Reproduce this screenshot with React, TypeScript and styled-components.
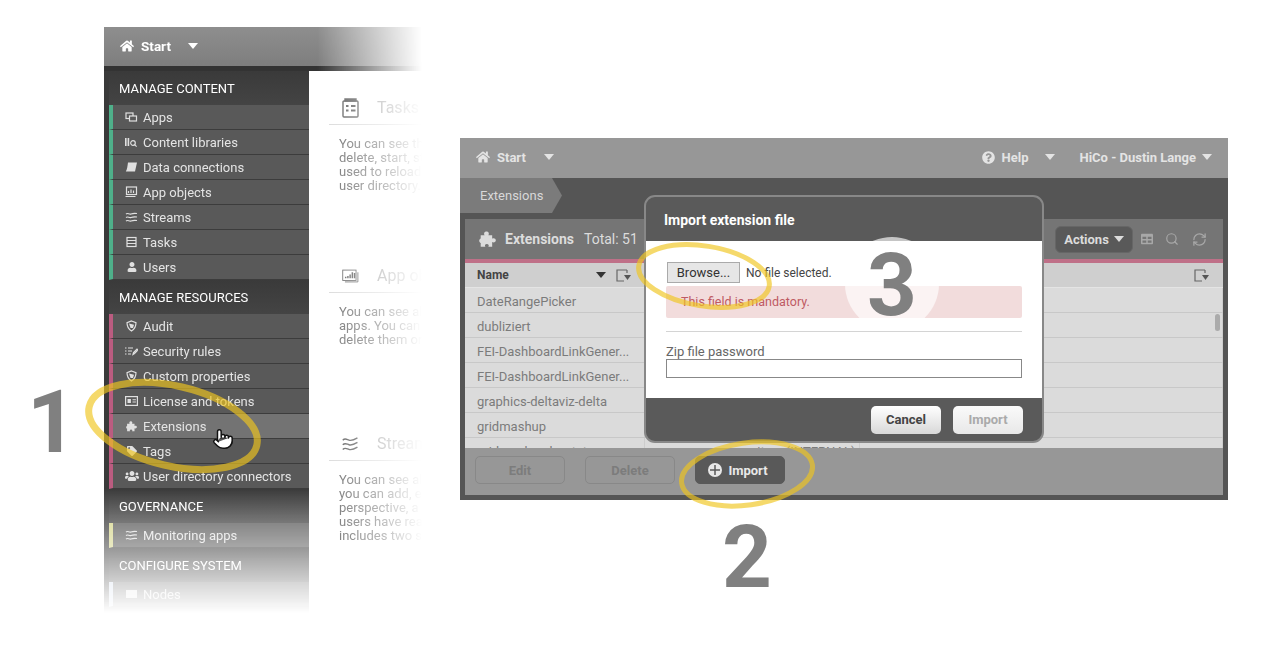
import React from "react";
import styled, { createGlobalStyle } from "styled-components";
import { FaHome, FaQuestionCircle, FaTable, FaTag, FaUser, FaUsers } from "react-icons/fa";
import { Search, RefreshCw, Pointer } from "lucide-react";

const GlobalStyle = createGlobalStyle`
  html, body {
    margin: 0;
    padding: 0;
    background: #fff;
    font-family: Roboto, "Liberation Sans", sans-serif;
  }
  * { box-sizing: border-box; }
`;

const Page = styled.div`
  position: relative;
  width: 1263px;
  height: 670px;
  overflow: hidden;
  display: flex;
  align-items: flex-start;
  gap: 38px;
  padding: 27px 0 0 104px;
`;

/* left screenshot */
const LeftShot = styled.div`
  width: 318px;
  display: flex;
  flex-direction: column;
`;

const FadedBar = styled.div`
  height: 44px;
  display: flex;
  flex-direction: column;
  -webkit-mask-image: linear-gradient(to right, #000 67%, transparent 100%);
  mask-image: linear-gradient(to right, #000 67%, transparent 100%);
`;

const FadedBarTop = styled.div`
  height: 39px;
  flex: none;
  display: flex;
  align-items: center;
  padding: 0 0 2px 16px;
  color: #fff;
  font-weight: 700;
  font-size: 13.5px;
  background: linear-gradient(#8e8e8e, #7e7e7e);
`;

const FadedBarStrip = styled.div`
  flex: 1;
  background: #333;
`;

const LeftBody = styled.div`
  display: flex;
  align-items: flex-start;
`;

const Sidebar = styled.nav`
  width: 205px;
  flex: none;
  height: 542px;
  background: #3a3a3a;
  padding-left: 5px;
  overflow: hidden;
  -webkit-mask-image: linear-gradient(to bottom, #000 77%, transparent 100%);
  mask-image: linear-gradient(to bottom, #000 77%, transparent 100%);
`;

const NavHead = styled.div`
  height: 34px;
  display: flex;
  align-items: center;
  padding-left: 10px;
  color: #fff;
  font-size: 13px;
  background: linear-gradient(#3a3a3a, #444);
`;

const NavItem = styled.div<{ $bar: string; $active?: boolean }>`
  height: 25px;
  display: flex;
  align-items: center;
  border-left: 4px solid ${(p) => p.$bar};
  border-bottom: 1px solid #3c3c3c;
  background: ${(p) => (p.$active ? "#737373" : "#595959")};
  color: #e4e4e4;
  font-size: 13px;
`;

const NavIcon = styled.span`
  width: 30px;
  flex: none;
  display: flex;
  justify-content: center;
  padding-left: 7px;
  color: #e0e0e0;
`;

const Content = styled.div`
  width: 113px;
  height: 542px;
  background: #fff;
  overflow: hidden;
  padding: 24px 0 0 20px;
  -webkit-mask-image: linear-gradient(to right, #000 18%, rgba(0, 0, 0, 0.5) 65%, transparent 100%);
  mask-image: linear-gradient(to right, #000 18%, rgba(0, 0, 0, 0.5) 65%, transparent 100%);
`;

const Section = styled.section`
  height: 168px;
  width: 320px;
`;

const SectionHead = styled.div`
  height: 30px;
  display: flex;
  align-items: center;
  border-bottom: 1px solid #ddd;
  padding: 0 0 4px 13px;
  gap: 18px;
  color: #aaa;
  font-size: 16px;
  white-space: nowrap;
`;

const SectionIcon = styled.span`
  width: 17px;
  display: flex;
  justify-content: center;
  color: #666;
`;

const SectionText = styled.p`
  margin: 12px 0 0 10px;
  color: #777;
  font-size: 13px;
  line-height: 14px;
  white-space: pre;
`;

/* right screenshot */
const RightShot = styled.div`
  position: relative;
  margin-top: 111px;
  width: 768px;
  height: 362px;
  display: flex;
  flex-direction: column;
  background: #555;
`;

const TopBar = styled.div`
  height: 40px;
  flex: none;
  background: #979797;
  display: flex;
  align-items: center;
  padding: 0 16px 2px;
  color: #e4e4e4;
  font-size: 13px;
  font-weight: 700;
`;

const TopEntry = styled.span<{ $gap?: number; $lead?: number }>`
  display: flex;
  align-items: center;
  gap: 7px;
  margin-left: ${(p) => p.$lead ?? 0}px;
  margin-right: ${(p) => p.$gap ?? 0}px;
`;

const Spacer = styled.div`
  flex: 1;
`;

const Caret = styled.i<{ $size?: number; $color?: string }>`
  display: inline-block;
  width: 0;
  height: 0;
  border-left: ${(p) => p.$size ?? 5}px solid transparent;
  border-right: ${(p) => p.$size ?? 5}px solid transparent;
  border-top: ${(p) => (p.$size ?? 5) + 1}px solid ${(p) => p.$color ?? "currentColor"};
`;

const Crumbs = styled.div`
  height: 41px;
  flex: none;
  display: flex;
  align-items: flex-start;
`;

const Crumb = styled.div`
  width: 102px;
  height: 35px;
  display: flex;
  align-items: center;
  padding-left: 20px;
  background: #7b7b7b;
  color: #d8d8d8;
  font-size: 13px;
  clip-path: polygon(0 0, 92px 0, 100% 50%, 92px 100%, 0 100%);
`;

const Panel = styled.div`
  flex: 1;
  margin: 0 5px 5px;
  display: flex;
  flex-direction: column;
  background: #979797;
`;

const PanelHead = styled.div`
  height: 44px;
  flex: none;
  display: flex;
  align-items: center;
  padding: 0 16px 0 14px;
  background: #757575;
  border-bottom: 4px solid #bf7088;
  color: #dcdcdc;
  font-size: 14px;
`;

const PanelTitle = styled.strong`
  margin: 0 10px 0 9px;
  font-weight: 700;
`;

const ActionsButton = styled.div`
  width: 78px;
  height: 27px;
  margin-right: 8px;
  border-radius: 6px;
  background: #595959;
  border: 1px solid #666;
  display: flex;
  align-items: center;
  justify-content: center;
  gap: 5px;
  font-size: 13px;
  font-weight: 700;
`;

const ToolIcon = styled.span<{ $gap: number }>`
  display: flex;
  color: #a8a8a8;
  margin-right: ${(p) => p.$gap}px;
`;

const TableHead = styled.div`
  height: 25px;
  flex: none;
  display: grid;
  grid-template-columns: 180px 215px 1fr;
  background: #cfcfcf;
  border-bottom: 1px solid #e4e4e4;
  color: #444;
  font-size: 12px;
  font-weight: 700;
`;

const HeadCell = styled.div`
  display: flex;
  align-items: center;
  justify-content: flex-end;
  gap: 10px;
  padding: 0 14px 0 12px;
`;

const HeadName = styled.span`
  margin-right: auto;
`;

const TableBody = styled.div`
  position: relative;
  height: 160px;
  flex: none;
  overflow: hidden;
  background: #dbdbdb;
`;

const Row = styled.div`
  height: 25px;
  display: grid;
  grid-template-columns: 180px 215px 1fr;
  border-bottom: 1px solid #c8c8c8;
  color: #7b7b7b;
  font-size: 13px;
`;

const Cell = styled.div<{ $indent?: number }>`
  display: flex;
  align-items: center;
  padding: 2px 0 0 ${(p) => p.$indent ?? 12}px;
  border-right: 1px solid #cdcdcd;
  white-space: nowrap;
  overflow: hidden;
`;

const Scroll = styled.div`
  position: absolute;
  right: 3px;
  top: 26px;
  width: 5px;
  height: 17px;
  border-radius: 3px;
  background: #ababab;
`;

const PanelFoot = styled.div`
  flex: 1;
  display: flex;
  align-items: center;
  gap: 20px;
  padding: 0 10px 3px;
`;

const FootButton = styled.div<{ $on?: boolean }>`
  width: 90px;
  height: 28px;
  border-radius: 5px;
  display: flex;
  align-items: center;
  justify-content: center;
  gap: 6px;
  padding-right: ${(p) => (p.$on ? 4 : 0)}px;
  font-size: 13px;
  font-weight: 700;
  color: ${(p) => (p.$on ? "#e8e8e8" : "#7c7c7c")};
  background: ${(p) => (p.$on ? "#595959" : "transparent")};
  border: 1px solid ${(p) => (p.$on ? "#595959" : "#888")};
`;

/* dialog */
const Modal = styled.div`
  position: absolute;
  left: 184px;
  top: 57px;
  width: 400px;
  height: 248px;
  display: flex;
  flex-direction: column;
  border: 2px solid #888;
  border-radius: 11px;
  overflow: hidden;
  background: #5a5a5a;
`;

const ModalHead = styled.div`
  height: 44px;
  flex: none;
  display: flex;
  align-items: center;
  padding: 2px 0 0 18px;
  color: #fff;
  font-size: 14px;
  font-weight: 700;
`;

const ModalBody = styled.div`
  height: 157px;
  flex: none;
  background: #fff;
  padding: 20px 20px 0;
`;

const FileRow = styled.div`
  height: 25px;
  display: flex;
  align-items: flex-start;
  gap: 6px;
  margin-left: 1px;
  color: #444;
  font-size: 12px;
  line-height: 24px;
`;

const BrowseButton = styled.div`
  width: 73px;
  height: 21px;
  margin-top: 1px;
  display: flex;
  align-items: center;
  justify-content: center;
  background: #e6e6e6;
  border: 1px solid #aaa;
  color: #333;
  font-size: 13px;
`;

const ErrorBox = styled.div`
  height: 32px;
  display: flex;
  align-items: center;
  padding: 0 0 2px 15px;
  border-radius: 2px;
  background: #f2dcdc;
  color: #bf5a63;
  font-size: 12.5px;
`;

const Divider = styled.div`
  margin: 13px 0 13px;
  border-top: 1px solid #d4d4d4;
`;

const FieldLabel = styled.div`
  height: 14px;
  line-height: 14px;
  color: #666;
  font-size: 13px;
`;

const FieldInput = styled.div`
  height: 19px;
  border: 1px solid #888;
`;

const ModalFoot = styled.div`
  flex: 1;
  display: flex;
  align-items: center;
  justify-content: flex-end;
  gap: 12px;
  padding: 0 19px 0 0;
`;

const ModalButton = styled.div<{ $muted?: boolean }>`
  width: 70px;
  height: 28px;
  border-radius: 5px;
  display: flex;
  align-items: center;
  justify-content: center;
  font-size: 13px;
  font-weight: 700;
  color: ${(p) => (p.$muted ? "#aaa" : "#444")};
  background: ${(p) =>
    p.$muted ? "linear-gradient(#fafafa, #e8e8e8)" : "linear-gradient(#fff, #d8d8d8)"};
`;

/* annotations */
const StepNumber = styled.div<{ $x: number; $y: number }>`
  position: absolute;
  left: ${(p) => p.$x}px;
  top: ${(p) => p.$y}px;
  color: #808080;
  font-family: Roboto, "Liberation Sans", sans-serif;
  font-weight: 700;
  font-size: 87px;
  line-height: 88px;
`;

const StepCircle = styled.div`
  position: absolute;
  left: 845px;
  top: 237px;
  width: 94px;
  height: 94px;
  border-radius: 50%;
  background: rgba(255, 255, 255, 0.65);
`;

const Rings = styled.svg`
  position: absolute;
  left: 0;
  top: 0;
  pointer-events: none;
`;

const HandCursor = styled.span`
  position: absolute;
  left: 212px;
  top: 428px;
  display: flex;
  color: #111;
`;

type Glyph = "apps" | "lib" | "data" | "objects" | "streams" | "tasks" | "shield" | "rules" | "card" | "nodes";

function SmallIcon({ name }: { name: Glyph }) {
  const stroke = { fill: "none", stroke: "currentColor", strokeWidth: 1.2 };
  return (
    <svg width="13" height="12" viewBox="0 0 13 12">
      {name === "apps" && (
        <g {...stroke}>
          <rect x="1" y="2" width="7" height="5.5" />
          <rect x="4.5" y="5" width="7" height="5" fill="#595959" />
        </g>
      )}
      {name === "lib" && (
        <g>
          <path d="M0 2h1.6v8H0zM2.6 2h1.6v8H2.6z" fill="currentColor" />
          <circle cx="8" cy="7" r="2.3" {...stroke} />
          <path d="M9.6 8.6l2 2" {...stroke} />
        </g>
      )}
      {name === "data" && <path d="M3 1.5h9l-2 9H0.8c1.4-2 1.6-5 2.2-9z" fill="currentColor" />}
      {name === "objects" && (
        <g {...stroke}>
          <rect x="1.5" y="1" width="10" height="7.5" />
          <path d="M0.5 10.5h10M3.5 7V5M6 7V3.5M8.5 7V4.5" />
        </g>
      )}
      {name === "streams" && (
        <path d="M1 3c2-1.6 3 .8 5 0s3-1 6-.5M1 6.5c2-1.6 3 .8 5 0s3-1 6-.5M1 10c2-1.6 3 .8 5 0s3-1 6-.5" {...stroke} />
      )}
      {name === "tasks" && (
        <g {...stroke}>
          <rect x="2" y="1.5" width="9" height="9" />
          <path d="M2 4.5h9M2 7.5h9" />
        </g>
      )}
      {name === "shield" && (
        <g>
          <path d="M6.5 1l4.5 1.6c0 4-1.6 6.8-4.5 8.4C3.6 9.4 2 6.6 2 2.6z" {...stroke} />
          <path d="M4 3.6l5 1.2-1 3.2H5.6z" fill="currentColor" />
        </g>
      )}
      {name === "rules" && (
        <path d="M0 3h1.5M3 3h5M0 6h1.5M3 6h4M0 9h1.5M3 9h3M8 9.5l.5-2 3.5-3.5 1 1-3.5 3.5z" {...stroke} />
      )}
      {name === "card" && (
        <g>
          <rect x="0.6" y="1.6" width="11.8" height="8.8" {...stroke} />
          <path d="M2.5 4h3.4v4H2.5zM7.5 4.2h3.4v1H7.5zM7.5 6.6h3.4v1H7.5z" fill="currentColor" />
        </g>
      )}
      {name === "nodes" && <path d="M1 2h11v8H1z" fill="currentColor" />}
    </svg>
  );
}

function PuzzleMark({ size }: { size: number }) {
  return (
    <svg width={size} height={size} viewBox="0 0 20 20" fill="currentColor">
      <path d="M2 5h4.6C5.4 3.4 6 .6 8.8.6s3.400 2.800 2.200 4.400H15.500v4C17 8 19.800 8.500 19.800 11s-2.800 3-4.300 2v5.500H11c1-1.500.5-3.200-1.800-3.200S6.500 17 7.500 18.500H2v-4.500C3.500 15 .2 14 .2 11.500S3.500 8 2 9z" />
    </svg>
  );
}

function TasksLogo() {
  return (
    <svg width="17" height="20" viewBox="0 0 17 20" fill="none" stroke="currentColor" strokeWidth="1.4">
      <path d="M3 1h11v2H3z" fill="currentColor" />
      <rect x="1" y="3" width="15" height="16" rx="1" />
      <path d="M4 8h2.500M9 8h4.500M4 12.500h2.500M9 12.500h4.500" strokeWidth="2" />
    </svg>
  );
}

function ObjectsLogo() {
  return (
    <svg width="23" height="20" viewBox="0 0 23 20" fill="none" stroke="currentColor" strokeWidth="1.2">
      <rect x="1" y="2" width="18" height="14" />
      <path d="M21.500 5v13H4" />
      <path d="M5 13v-2M8 13v-3M11 13V8M14 13V5M17 13V6" strokeWidth="2" />
    </svg>
  );
}

function StreamsLogo() {
  return (
    <svg width="22" height="20" viewBox="0 0 22 20" fill="none" stroke="currentColor" strokeWidth="1.8">
      <path d="M1 5c3-3 5-1 8 0s6 0 11-3M1 11c3-3 5-1 8 0s6 0 11-3M1 17c3-3 5-1 8 0s6 0 11-3" />
    </svg>
  );
}

function HeadFilter() {
  return (
    <svg width="15" height="13" viewBox="0 0 15 13" fill="none">
      <path d="M11 1H1v11h7M11 1v3" stroke="#666" strokeWidth="1.2" />
      <path d="M8 6h7l-3.500 5z" fill="#555" />
    </svg>
  );
}

function PlusDisc() {
  return (
    <svg width="14" height="14" viewBox="0 0 14 14">
      <circle cx="7" cy="7" r="7" fill="#e8e8e8" />
      <path d="M7 2v10M2 7h10" stroke="#595959" strokeWidth="1.5" />
    </svg>
  );
}

const GREEN = "#4fb08a";
const PINK = "#bb5c80";
const YELLOW = "#d5d58a";
const BLUE = "#c9d6ea";

const navGroups: {
  title: string;
  bar: string;
  items: { label: string; icon: React.ReactNode; active?: boolean }[];
}[] = [
  {
    title: "MANAGE CONTENT",
    bar: GREEN,
    items: [
      { label: "Apps", icon: <SmallIcon name="apps" /> },
      { label: "Content libraries", icon: <SmallIcon name="lib" /> },
      { label: "Data connections", icon: <SmallIcon name="data" /> },
      { label: "App objects", icon: <SmallIcon name="objects" /> },
      { label: "Streams", icon: <SmallIcon name="streams" /> },
      { label: "Tasks", icon: <SmallIcon name="tasks" /> },
      { label: "Users", icon: <FaUser size={10} /> },
    ],
  },
  {
    title: "MANAGE RESOURCES",
    bar: PINK,
    items: [
      { label: "Audit", icon: <SmallIcon name="shield" /> },
      { label: "Security rules", icon: <SmallIcon name="rules" /> },
      { label: "Custom properties", icon: <SmallIcon name="shield" /> },
      { label: "License and tokens", icon: <SmallIcon name="card" /> },
      { label: "Extensions", icon: <PuzzleMark size={11} />, active: true },
      { label: "Tags", icon: <FaTag size={10} /> },
      { label: "User directory connectors", icon: <FaUsers size={14} /> },
    ],
  },
  {
    title: "GOVERNANCE",
    bar: YELLOW,
    items: [{ label: "Monitoring apps", icon: <SmallIcon name="streams" /> }],
  },
  {
    title: "CONFIGURE SYSTEM",
    bar: BLUE,
    items: [{ label: "Nodes", icon: <SmallIcon name="nodes" /> }],
  },
];

const sections = [
  {
    title: "Tasks (reload)",
    logo: <TasksLogo />,
    text: "You can see the tasks and\ndelete, start, stop them. Tasks are\nused to reload apps and sync\nuser directory.",
  },
  {
    title: "App objects",
    logo: <ObjectsLogo />,
    text: "You can see all objects of your\napps. You can view, edit and\ndelete them or change owner.",
  },
  {
    title: "Streams",
    logo: <StreamsLogo />,
    text: "You can see all streams and\nyou can add, edit them. From this\nperspective, a stream is where\nusers have read access and\nincludes two streams.",
  },
];

const rows = [
  { name: "DateRangePicker" },
  { name: "dubliziert" },
  { name: "FEI-DashboardLinkGener..." },
  { name: "FEI-DashboardLinkGener..." },
  { name: "graphics-deltaviz-delta" },
  { name: "gridmashup" },
  { name: "gridmashup-bootstrap", owner: "sa_repository (INTERNAL)" },
];

export default function App() {
  return (
    <Page>
      <GlobalStyle />
      <LeftShot>
        <FadedBar>
          <FadedBarTop>
            <TopEntry $gap={17}>
              <FaHome size={14} />
              Start
            </TopEntry>
            <Caret $size={5} />
          </FadedBarTop>
          <FadedBarStrip />
        </FadedBar>
        <LeftBody>
          <Sidebar>
            {navGroups.map((group) => (
              <div key={group.title}>
                <NavHead>{group.title}</NavHead>
                {group.items.map((item) => (
                  <NavItem key={item.label} $bar={group.bar} $active={item.active}>
                    <NavIcon>{item.icon}</NavIcon>
                    {item.label}
                  </NavItem>
                ))}
              </div>
            ))}
          </Sidebar>
          <Content>
            {sections.map((s) => (
              <Section key={s.title}>
                <SectionHead>
                  <SectionIcon>{s.logo}</SectionIcon>
                  {s.title}
                </SectionHead>
                <SectionText>{s.text}</SectionText>
              </Section>
            ))}
          </Content>
        </LeftBody>
      </LeftShot>

      <RightShot>
        <TopBar>
          <TopEntry $gap={18}>
            <FaHome size={14} />
            Start
          </TopEntry>
          <Caret />
          <Spacer />
          <TopEntry $gap={17}>
            <FaQuestionCircle size={13} />
            Help
          </TopEntry>
          <Caret />
          <TopEntry $gap={6} $lead={24}>
            HiCo - Dustin Lange
          </TopEntry>
          <Caret />
        </TopBar>
        <Crumbs>
          <Crumb>Extensions</Crumb>
        </Crumbs>
        <Panel>
          <PanelHead>
            <PuzzleMark size={17} />
            <PanelTitle>Extensions</PanelTitle>
            Total: 51
            <Spacer />
            <ActionsButton>
              Actions
              <Caret $size={5} />
            </ActionsButton>
            <ToolIcon $gap={12}>
              <FaTable size={12} />
            </ToolIcon>
            <ToolIcon $gap={13}>
              <Search size={14} />
            </ToolIcon>
            <ToolIcon $gap={0}>
              <RefreshCw size={15} />
            </ToolIcon>
          </PanelHead>
          <TableHead>
            <HeadCell>
              <HeadName>Name</HeadName>
              <Caret $size={5} $color="#333" />
              <HeadFilter />
            </HeadCell>
            <HeadCell />
            <HeadCell>
              <HeadFilter />
            </HeadCell>
          </TableHead>
          <TableBody>
            {rows.map((row, i) => (
              <Row key={i}>
                <Cell>{row.name}</Cell>
                <Cell $indent={60}>{row.owner}</Cell>
                <Cell />
              </Row>
            ))}
            <Scroll />
          </TableBody>
          <PanelFoot>
            <FootButton>Edit</FootButton>
            <FootButton>Delete</FootButton>
            <FootButton $on>
              <PlusDisc />
              Import
            </FootButton>
          </PanelFoot>
        </Panel>
        <Modal>
          <ModalHead>Import extension file</ModalHead>
          <ModalBody>
            <FileRow>
              <BrowseButton>Browse...</BrowseButton>
              No file selected.
            </FileRow>
            <ErrorBox>This field is mandatory.</ErrorBox>
            <Divider />
            <FieldLabel>Zip file password</FieldLabel>
            <FieldInput />
          </ModalBody>
          <ModalFoot>
            <ModalButton>Cancel</ModalButton>
            <ModalButton $muted>Import</ModalButton>
          </ModalFoot>
        </Modal>
      </RightShot>

      <HandCursor>
        <Pointer size={22} fill="#fff" strokeWidth={1.6} />
      </HandCursor>
      <StepCircle />
      <StepNumber $x={27} $y={378}>1</StepNumber>
      <StepNumber $x={722} $y={513}>2</StepNumber>
      <StepNumber $x={867} $y={241}>3</StepNumber>
      <Rings width="1263" height="670" fill="none" stroke="rgb(240, 198, 30)" strokeOpacity="0.66">
        <ellipse cx="173" cy="426" rx="86" ry="40" strokeWidth="7" transform="rotate(13 173 426)" />
        <ellipse cx="747" cy="474" rx="66" ry="31" strokeWidth="5" transform="rotate(-8 747 474)" />
        <ellipse cx="704" cy="276" rx="66" ry="30" strokeWidth="5" transform="rotate(9 704 276)" />
      </Rings>
    </Page>
  );
}
